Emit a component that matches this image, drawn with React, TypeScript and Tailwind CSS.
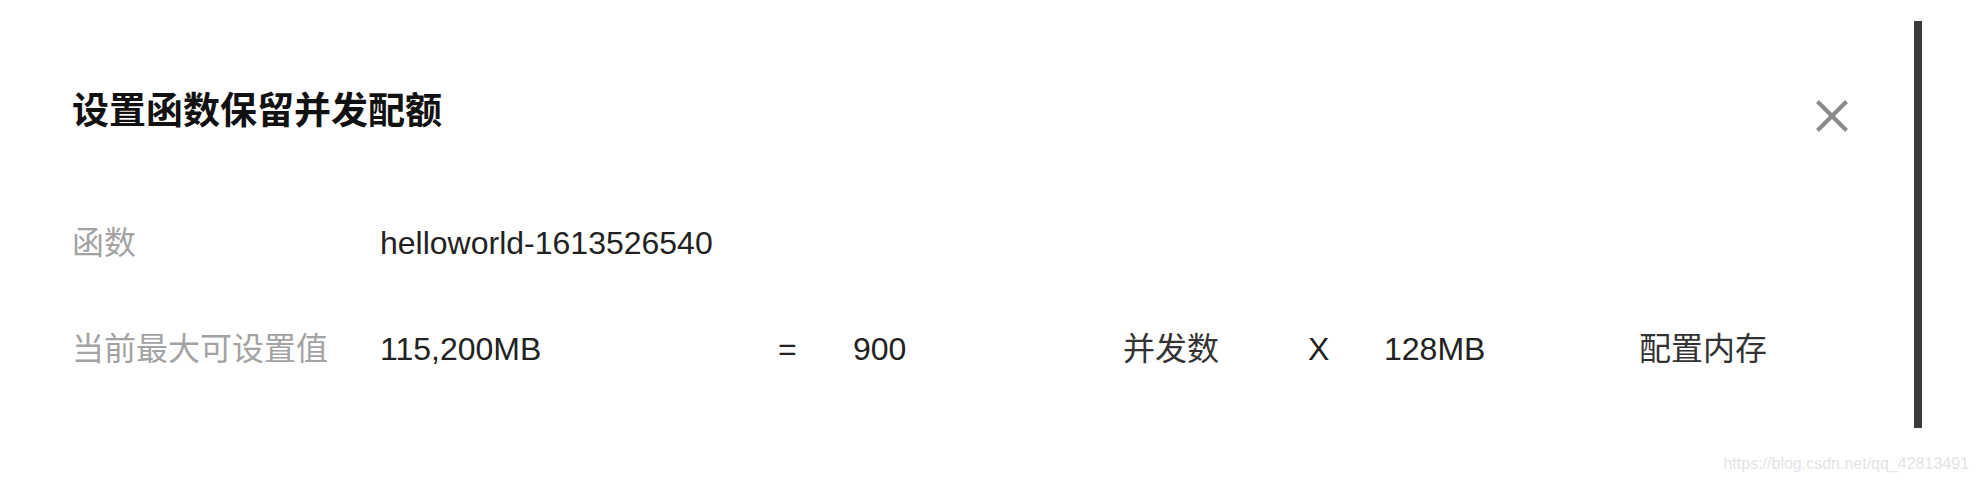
import React from "react";

const FONT = { fontFamily: '"Liberation Sans", "Noto Sans CJK SC", sans-serif' };

function CloseIcon() {
  return (
    <svg width="32" height="32" viewBox="0 0 32 32" className="block">
      <path d="M3 3 L29 29 M29 3 L3 29" stroke="#8a8a8a" strokeWidth="4.2" strokeLinecap="square" fill="none" />
    </svg>
  );
}

export default function App() {
  return (
    <div className="relative w-[1978px] h-[482px] bg-white flex overflow-hidden" style={FONT}>
      <div className="flex-1 pl-[72px] pr-[66px] pt-[93px]">
        <div className="flex justify-between items-start">
          <h1 className="text-[37px] leading-[38px] font-bold text-[#111]">设置函数保留并发配额</h1>
          <button className="mt-[7px]" aria-label="关闭">
            <CloseIcon />
          </button>
        </div>

        <div className="mt-[95px] flex items-center text-[32px] leading-[32px]">
          <div className="w-[308px] text-[#a3a3a3]">函数</div>
          <div className="text-[#222]">helloworld-1613526540</div>
        </div>

        <div className="mt-[74px] flex items-center text-[32px] leading-[32px] text-[#222]">
          <div className="w-[308px] text-[#a3a3a3]">当前最大可设置值</div>
          <div className="w-[398px]">115,200MB</div>
          <div className="w-[75px]">=</div>
          <div className="w-[270px]">900</div>
          <div className="w-[185px] text-[#333]">并发数</div>
          <div className="w-[76px]">X</div>
          <div className="w-[255px]">128MB</div>
          <div className="text-[#333]">配置内存</div>
        </div>
      </div>

      <div className="mt-[21px] h-[407px] w-[8px] bg-[#3a3a3a] mr-[56px]" />

      <div className="absolute bottom-[9px] right-[9px] text-[16px] leading-[18px] text-[#e4e4e4]">
        https://blog.csdn.net/qq_42813491
      </div>
    </div>
  );
}
